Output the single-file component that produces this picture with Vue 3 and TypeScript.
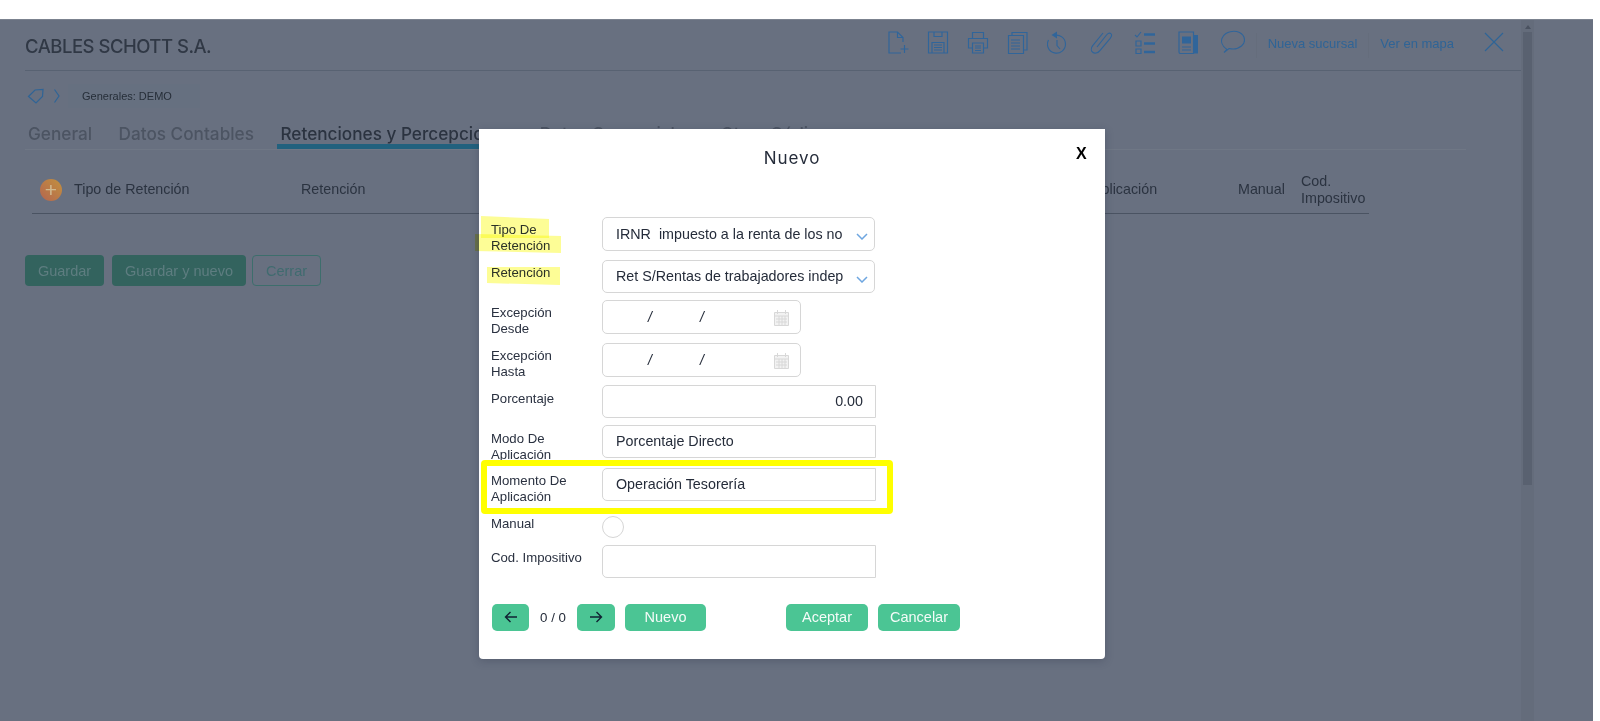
<script setup lang="ts">
const columns = [
  { label: 'Tipo de Retención', width: 227 },
  { label: 'Retención', width: 199 },
  { label: 'Excepción Desde', width: 100 },
  { label: 'Excepción Hasta', width: 100 },
  { label: 'Porcentaje', width: 100 },
  { label: 'Modo De Aplicación', width: 207 },
  { label: 'Momento De Aplicación', width: 231 },
  { label: 'Manual', width: 63 },
  { label: 'Cod. Impositivo', width: 68 },
]
</script>

<template>
  <div class="screen">
    <main class="panel">
      <header class="topbar">
        <h1 class="company">CABLES SCHOTT S.A.</h1>
        <div class="tools">
          <svg class="ico" viewBox="0 0 24 24"><path d="M16 12V7.500L10.500 2H2v21h12M10.500 2v5.500H16M17.500 15v8M13.500 19h8" /></svg>
          <svg class="ico" viewBox="0 0 24 24"><path d="M1.500 2h19v21h-19zM7 2v4.500h8V2M5 23v-10.500h12V23M7 15h8M7 17.500h8M7 20h8" /></svg>
          <svg class="ico" viewBox="0 0 24 24"><path d="M5.500 8V2.500h11V8M5 18H1.500V8.500h19V18H17M5.500 13h11v10h-11zM8 16h6M8 18h6M8 20.500h6" /></svg>
          <svg class="ico" viewBox="0 0 24 24"><path d="M5 5.500V2.500h15v17.500h-3M1.500 5.500h15v18h-15zM4 10h9M4 13h9M4 16h9M4 19h9" /></svg>
          <svg class="ico" viewBox="0 0 24 24"><path d="M7 5.500a9 9 0 1 1-5.500 4.500M10 10v5.500l3 3.500" /><path class="solid" d="M10 1.500v7L4.500 5z" /></svg>
          <svg class="ico clip" viewBox="0 0 24 24"><path d="M8 17 17.500 5c1.400-1.800 3.300-2.300 4.300-1.400s.8 3-.6 4.800L10.500 21c-1.800 2-4.900 2.800-6.800 1.300s-1.600-4.500 0-6.600L14 3" /></svg>
          <svg class="ico wide" viewBox="0 0 24 24"><path d="M2 5l2 2 4-5M3 11h5v5H3zM3 19h5v4.500H3z" /><path class="thick" d="M11 4.500h11M11 13.500h11M11 22h11" /></svg>
          <svg class="ico wide" viewBox="0 0 24 24"><path d="M2 2h14.500v21.500H3.500c-1 0-1.500-.5-1.500-1.500zM5 17h9M5 20h9" /><path class="solid" d="M5 6.500h9v7H5zM17 5h4v18.500h-4z" /></svg>
          <svg class="ico wide" viewBox="0 0 24 24"><path d="M6 19.500C1 16 -1 11 2 6.500 5 1.500 13 0 18.500 2.500c6 3 6.500 10 2 13.500-3.500 3-8 3.500-12.500 2.500L3 22.500z" /></svg>
          <span class="sep"></span>
          <a class="link">Nueva sucursal</a>
          <span class="sep"></span>
          <a class="link">Ver en mapa</a>
          <svg class="close-ico" viewBox="0 0 20 20"><path d="M1 1l18 18M19 1 1 19" /></svg>
        </div>
      </header>

      <nav class="crumbs">
        <svg class="tag" viewBox="0 0 18 16"><path d="M1.500 8.500 8 2l8-.5-.5 7L9 15zM12.500 4.500v.1" /></svg>
        <svg class="chev" viewBox="0 0 8 16"><path d="M1.500 1.500 6 8l-4.500 6.500" /></svg>
        <span class="crumb">Generales: DEMO</span>
      </nav>

      <div class="tabs">
        <span class="tab">General</span>
        <span class="tab">Datos Contables</span>
        <span class="tab active">Retenciones y Percepciones</span>
        <span class="tab">Datos Comerciales</span>
        <span class="tab">Otros Códigos</span>
      </div>

      <div class="thead">
        <span class="add"><span>+</span></span>
        <span v-for="c in columns" :key="c.label" class="th" :style="{ width: c.width + 'px' }">{{ c.label }}</span>
      </div>

      <div class="actions">
        <button class="btn primary">Guardar</button>
        <button class="btn primary wide-btn">Guardar y nuevo</button>
        <button class="btn outline">Cerrar</button>
      </div>
    </main>

    <div class="scrollbar"><span class="arrow"></span><span class="thumb"></span></div>

    <section class="modal">
      <h2 class="modal-title">Nuevo</h2>
      <span class="modal-close">X</span>

      <form class="form" @submit.prevent>
        <label class="lbl">Tipo De Retención</label>
        <div class="field h34 select"><span class="val">IRNR&nbsp; impuesto a la renta de los no</span><svg class="caret" viewBox="0 0 12 7"><path d="M1 1l5 5 5-5" /></svg></div>

        <label class="lbl">Retención</label>
        <div class="field h33 select"><span class="val">Ret S/Rentas de trabajadores indep</span><svg class="caret" viewBox="0 0 12 7"><path d="M1 1l5 5 5-5" /></svg></div>

        <label class="lbl">Excepción Desde</label>
        <div class="field h34 date"><i>/</i><i>/</i>
          <svg class="cal" viewBox="0 0 15 16"><path d="M.5 2.500h14v13H.5z" fill="#f2f2f2" /><path d="M3.500 0v4M11.500 0v4M1 6h13M2 9h11M2 12h11M5 6v9M8 6v9M11 6v9" /></svg>
        </div>

        <label class="lbl">Excepción Hasta</label>
        <div class="field h34 date"><i>/</i><i>/</i>
          <svg class="cal" viewBox="0 0 15 16"><path d="M.5 2.500h14v13H.5z" fill="#f2f2f2" /><path d="M3.500 0v4M11.500 0v4M1 6h13M2 9h11M2 12h11M5 6v9M8 6v9M11 6v9" /></svg>
        </div>

        <label class="lbl pct">Porcentaje</label>
        <div class="field h33 flat right">0.00</div>

        <label class="lbl pct">Modo De Aplicación</label>
        <div class="field h33 flat">Porcentaje Directo</div>

        <label class="lbl">Momento De Aplicación</label>
        <div class="field h33 flat">Operación Tesorería</div>

        <label class="lbl manual">Manual</label>
        <span class="radio"></span>

        <label class="lbl">Cod. Impositivo</label>
        <div class="field h33 flat"></div>
      </form>

      <div class="modal-actions">
        <button class="mbtn arrowbtn"><svg viewBox="0 0 14 12"><path d="M13 6H1.500M6.500 1 1.500 6l5 5" /></svg></button>
        <span class="pager">0 / 0</span>
        <button class="mbtn arrowbtn"><svg viewBox="0 0 14 12"><path d="M1 6h11.500M7.500 1l5 5-5 5" /></svg></button>
        <button class="mbtn textbtn">Nuevo</button>
        <span class="spacer"></span>
        <button class="mbtn textbtn wideb">Aceptar</button>
        <button class="mbtn textbtn wideb">Cancelar</button>
      </div>
    </section>

    <span class="mark m1"></span>
    <span class="mark m2"></span>
    <span class="mark m3"></span>
    <span class="box"></span>
  </div>
</template>

<style>
html, body { margin: 0; background: #fff; overflow: hidden; }
</style>

<style scoped>
.screen {
  position: relative;
  display: flex;
  width: 1593px;
  height: 702px;
  margin-top: 19px;
  background: #687080;
  border-top: 1px solid #7b828f;
  box-sizing: border-box;
  overflow: hidden;
  font-family: "Liberation Sans", Arial, sans-serif;
  color: #2b3340;
}
.panel { width: 1521px; padding-left: 25px; box-sizing: border-box; flex: none; }

.topbar {
  display: flex;
  align-items: center;
  height: 50px;
  border-bottom: 1px solid #586272;
}
.company {
  margin: 2px 0 0;
  font: 500 18.500px/1 Inter, sans-serif;
  letter-spacing: -.5px;
  color: #303845;
}
.tools { display: flex; align-items: center; margin-left: auto; padding-right: 17px; color: #2f6496; }
.ico { width: 24px; height: 24px; margin: 0 0 6px 16px; fill: none; stroke: #30659a; stroke-width: 1.150; }
.ico.wide { margin-left: 20px; }
.ico.clip { margin-left: 18px; }
.ico .solid { fill: #30659a; stroke: none; }
.ico .thick { stroke-width: 2.300; }
.sep { width: 1px; height: 25px; background: #656d7c; margin-left: 11px; }
.link { font-size: 13px; margin: 0 0 3px 11px; color: #2f6496; }
.close-ico { width: 20px; height: 20px; margin-left: 30px; margin-top: -6px; fill: none; stroke: #2f6496; stroke-width: 1.200; }

.crumbs { display: flex; align-items: center; height: 50px; padding-left: 2px; padding-bottom: 2px; }
.tag { width: 18px; height: 16px; fill: none; stroke: #2f6496; stroke-width: 1.200; }
.chev { width: 8px; height: 16px; margin-left: 8px; fill: none; stroke: #2f6496; stroke-width: 1.200; }
.crumb {
  margin-left: 7px;
  padding: 5px 28px 5px 14px;
  background: #667080;
  font-size: 11px;
  line-height: 14px;
  color: #262e38;
}

.tabs {
  display: flex;
  height: 28px;
  width: 1441px;
  border-bottom: 1px solid #6f7785;
  font: 500 17.200px/24px Inter, sans-serif;
  color: #4c5462;
  margin-top: -2px;
}
.tab { padding: 1px 3px 0; margin-right: 20.500px; white-space: nowrap; height: 27px; }
.tab.active { color: #2b3340; border-bottom: 5px solid #22617e; height: 22px; }

.thead {
  display: flex;
  align-items: center;
  width: 1337px;
  height: 47px;
  padding-top: 16px;
  margin-left: 7px;
  border-bottom: 1px solid #4a5362;
}
.add {
  display: flex;
  align-items: center;
  justify-content: center;
  flex: none;
  width: 22px;
  height: 22px;
  margin: 0 12px 0 8px;
  border-radius: 50%;
  background: linear-gradient(45deg, #b4654f, #c2913f);
  color: #d0b98f;
  font-size: 21px;
  line-height: 22px;
}
.th { flex: none; font-size: 14.300px; line-height: 17px; color: #2b3340; }

.actions { display: flex; gap: 8px; margin-top: 41px; }
.btn {
  height: 31px;
  padding: 0;
  border-radius: 4px;
  font: 14.500px "Liberation Sans", Arial, sans-serif;
  border: 1px solid transparent;
}
.primary { width: 79px; background: #33635e; color: #5e7d80; }
.wide-btn { width: 134px; }
.outline { width: 69px; margin-left: -2px; background: transparent; border-color: #3d6e6c; color: #406b6f; }

.scrollbar {
  position: relative;
  flex: none;
  width: 9px;
  padding: 0 2px;
  background: #646c7b;
}
.arrow {
  display: block;
  width: 0;
  margin: 5px auto 0;
  border: 3px solid transparent;
  border-top: 0;
  border-bottom: 4px solid #4a5260;
}
.thumb { display: block; height: 453px; margin-top: 3px; background: #596170; }

.modal {
  position: absolute;
  left: 479px;
  top: 109px;
  width: 626px;
  height: 530px;
  box-sizing: border-box;
  padding: 0 0 0 12px;
  background: #fff;
  border-radius: 0 0 4px 4px;
  box-shadow: 0 2px 8px rgba(30, 40, 60, .25);
  color: #252c3a;
}
.modal-title {
  margin: 0 0 0 -12px;
  height: 88px;
  padding-top: 16px;
  box-sizing: border-box;
  text-align: center;
  font: 400 17px/26px Inter, sans-serif;
  letter-spacing: .95px;
  color: #252c3a;
}
.modal-close {
  position: absolute;
  left: 597px;
  top: 16px;
  font: 700 16px/18px "Liberation Sans", Arial, sans-serif;
  color: #000;
}

.form {
  display: grid;
  grid-template-columns: 111px 274px;
  grid-template-rows: 43px 40px 43px 42px 40px 43px 48px 29px 33px;
  align-items: start;
}
.lbl { padding-top: 5px; width: 92px; font-size: 13.200px; line-height: 16px; color: #2a3140; }
.lbl.pct { padding-top: 6px; }
.lbl.manual { padding-top: 0; }
.field {
  display: flex;
  align-items: center;
  box-sizing: border-box;
  padding: 0 12px 1px 13px;
  border: 1px solid #d6d6d6;
  font-size: 14.300px;
  color: #252c3a;
  white-space: nowrap;
  background: #fff;
}
.h34 { height: 34px; }
.h33 { height: 33px; }
.select { width: 273px; border-radius: 5px; }
.val { display: block; }
.caret { width: 12px; height: 7px; margin-left: auto; margin-right: -6px; margin-top: 6px; fill: none; stroke: #6ea6e0; stroke-width: 1.500; }
.date { width: 199px; border-radius: 5px; padding: 0 11px 1px 45px; }
.date i { width: 52px; font-style: italic; font-size: 14px; }
.cal { width: 15px; height: 16px; margin-left: auto; margin-top: 2px; fill: none; stroke: #d8d8d8; stroke-width: 1; }
.flat { border-radius: 5px 0 0 5px; }
.right { justify-content: flex-end; }
.radio { display: block; width: 22px; height: 22px; box-sizing: border-box; border: 1px solid #d6d6d6; border-radius: 50%; }

.modal-actions { display: flex; align-items: center; height: 27px; margin: 26px 0 0 1px; width: 468px; }
.mbtn {
  display: flex;
  align-items: center;
  justify-content: center;
  height: 27px;
  padding: 0 0 1px;
  border: 0;
  border-radius: 5px;
  background: #4bc594;
  color: #f4fbf8;
  font: 14.500px "Liberation Sans", Arial, sans-serif;
}
.arrowbtn { width: 38px; }
.arrowbtn:first-child { width: 37px; }
.arrowbtn svg { width: 14px; height: 12px; fill: none; stroke: #123; stroke-width: 1.400; }
.pager { width: 48px; text-align: center; font-size: 13.300px; color: #252c3a; }
.textbtn { width: 81px; margin-left: 10px; }
.wideb { width: 82px; }
.spacer { flex: 1; }

.mark { position: absolute; background: #fdfd96; mix-blend-mode: multiply; }
.m1 { left: 481px; top: 196px; width: 68px; height: 22px; clip-path: polygon(0 0, 100% 3px, 100% 100%, 0 100%); }
.m2 { left: 475px; top: 214px; width: 86px; height: 19px; clip-path: polygon(0 0, 100% 2px, 100% 100%, 0 17px); }
.m3 { left: 487px; top: 247px; width: 73px; height: 18px; clip-path: polygon(0 0, 100% 0, 100% 100%, 0 16px); }
.box {
  position: absolute;
  left: 481px;
  top: 440px;
  width: 412px;
  height: 54px;
  box-sizing: border-box;
  border: 6px solid #ffff00;
  border-radius: 4px;
}
</style>
